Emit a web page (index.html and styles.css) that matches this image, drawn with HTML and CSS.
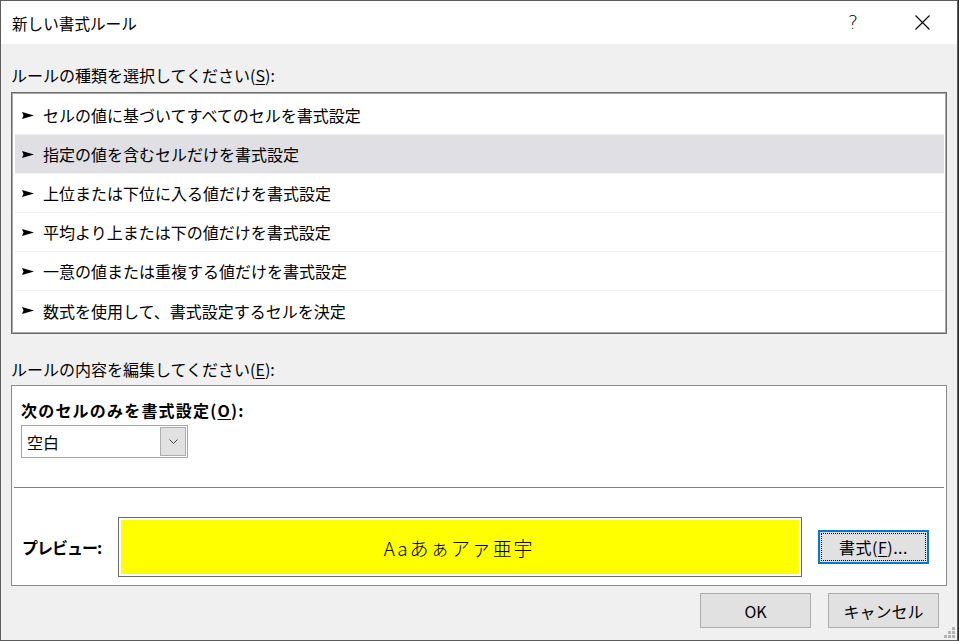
FILE: index.html
```html
<!DOCTYPE html>
<html lang="ja">
<head>
<meta charset="utf-8">
<title>新しい書式ルール</title>
<link rel="stylesheet" href="styles.css">
</head>
<body>
<div class="window">
  <div class="titlebar">
    <span class="title">新しい書式ルール</span>
    <div class="title-actions">
      <span class="help">?</span>
      <svg class="close" width="15" height="15" viewBox="0 0 15 15"><path d="M0.5 0.5 L14.5 14.5 M14.5 0.5 L0.5 14.5" stroke="#000" stroke-width="1.1" fill="none"/></svg>
    </div>
  </div>

  <div class="content">
    <div class="label label-first">ルールの種類を選択してください(<u>S</u>):</div>
    <div class="listbox">
      <div class="row"><svg class="arrow" width="12" height="7" viewBox="0 0 12 7"><path d="M0 0 L12 3.5 L0 7 L1.5 3.5 Z" fill="#000"/></svg><span>セルの値に基づいてすべてのセルを書式設定</span></div>
      <div class="row selected"><svg class="arrow" width="12" height="7" viewBox="0 0 12 7"><path d="M0 0 L12 3.5 L0 7 L1.5 3.5 Z" fill="#000"/></svg><span>指定の値を含むセルだけを書式設定</span></div>
      <div class="row"><svg class="arrow" width="12" height="7" viewBox="0 0 12 7"><path d="M0 0 L12 3.5 L0 7 L1.5 3.5 Z" fill="#000"/></svg><span>上位または下位に入る値だけを書式設定</span></div>
      <div class="row"><svg class="arrow" width="12" height="7" viewBox="0 0 12 7"><path d="M0 0 L12 3.5 L0 7 L1.5 3.5 Z" fill="#000"/></svg><span>平均より上または下の値だけを書式設定</span></div>
      <div class="row"><svg class="arrow" width="12" height="7" viewBox="0 0 12 7"><path d="M0 0 L12 3.5 L0 7 L1.5 3.5 Z" fill="#000"/></svg><span>一意の値または重複する値だけを書式設定</span></div>
      <div class="row"><svg class="arrow" width="12" height="7" viewBox="0 0 12 7"><path d="M0 0 L12 3.5 L0 7 L1.5 3.5 Z" fill="#000"/></svg><span>数式を使用して、書式設定するセルを決定</span></div>
    </div>

    <div class="label label-second">ルールの内容を編集してください(<u>E</u>):</div>
    <div class="editbox">
      <div class="edit-top">
        <div class="bold-label">次のセルのみを書式設定(<u>O</u>):</div>
        <div class="combo">
          <span class="combo-value">空白</span>
          <span class="combo-btn"><svg width="9" height="5" viewBox="0 0 9 5"><path d="M0.5 0.5 L4.5 4.5 L8.5 0.5" stroke="#444" stroke-width="1" fill="none"/></svg></span>
        </div>
      </div>
      <div class="divider"></div>
      <div class="preview-row">
        <span class="bold-label preview-label">プレビュー:</span>
        <div class="preview-frame"><div class="preview-fill">Aaあぁアァ亜宇</div></div>
        <button class="btn btn-format"><span class="focus">書式(<u>F</u>)...</span></button>
      </div>
    </div>

    <div class="buttons">
      <button class="btn btn-main">OK</button>
      <button class="btn btn-main">キャンセル</button>
    </div>
  </div>
  <div class="grip">
    <i class="d1"></i><i class="d2"></i><i class="d3"></i><i class="d4"></i><i class="d5"></i><i class="d6"></i>
  </div>
</div>
</body>
</html>
```

FILE: styles.css
```css
* { box-sizing: border-box; }

html, body {
  margin: 0;
  padding: 0;
  background: #2a2a2a;
}

body {
  width: 959px;
  height: 641px;
  font-family: "Noto Sans CJK JP", "Noto Sans", sans-serif;
  font-size: 16px;
  color: #000;
}

.window {
  position: relative;
  width: 958px;
  height: 641px;
  border: 1px solid #5c5c5c;
  background: #f0f0f0;
  display: flex;
  flex-direction: column;
}

/* title bar */
.titlebar {
  height: 43px;
  background: #fff;
  display: flex;
  align-items: center;
  justify-content: space-between;
  padding-left: 11px;
}
.title {
  font-size: 15.6px;
  line-height: 20px;
}
.title-actions {
  display: flex;
  align-items: center;
  height: 100%;
}
.help {
  width: 30px;
  text-align: center;
  font-family: "DejaVu Sans", sans-serif;
  font-weight: 300;
  font-size: 19px;
  line-height: 20px;
  margin-right: 47px;
  margin-top: -2px;
}
.close {
  margin-right: 27px;
}

/* main area */
.content {
  padding: 0 10px;
  display: flex;
  flex-direction: column;
}

.label {
  line-height: 20px;
  height: 20px;
}
.label-first { margin-top: 21px; }
.label-second { margin-top: 25px; }
u { text-underline-offset: 2px; }

.listbox {
  margin-top: 7px;
  height: 242px;
  background: #fff;
  border: 1px solid #6a6a6a;
  box-shadow: inset 0 0 0 1px #a8a8a8;
  padding: 3px 2px 2px 3px;
}
.row {
  height: 39px;
  display: flex;
  align-items: center;
  padding-left: 7px;
  border-bottom: 1px solid #f0f0f0;
}
.row:last-child { border-bottom: none; }
.row.selected {
  background: #dfdfe4;
  border-bottom-color: #f4f4f4;
}
.arrow {
  margin-right: 9px;
  flex: none;
}

/* rule editor */
.editbox {
  margin-top: 6px;
  height: 201px;
  background: #fff;
  border: 1px solid #8a8a8a;
  display: flex;
  flex-direction: column;
}
.edit-top {
  padding: 14px 10px 0 9px;
}
.bold-label {
  font-weight: bold;
  line-height: 20px;
  font-size: 16px;
  letter-spacing: 1.2px;
}
.combo {
  margin-top: 5px;
  width: 167px;
  height: 33px;
  border: 1px solid #a5a5a5;
  display: flex;
  align-items: center;
  justify-content: space-between;
  padding: 0 1px 0 5px;
  background: #fff;
}
.combo-value { font-size: 16px; }
.combo-btn {
  width: 26px;
  height: 29px;
  background: #e1e1e1;
  border: 1px solid #adadad;
  display: flex;
  align-items: center;
  justify-content: center;
}

.divider {
  margin: 29px 2px 0 2px;
  height: 1px;
  background: #7f7f7f;
}

.preview-row {
  margin-top: 29px;
  display: flex;
  align-items: center;
  padding: 0 17px 0 10px;
}
.preview-label {
  width: 96px;
  letter-spacing: -1px;
}
.preview-frame {
  width: 684px;
  height: 60px;
  border: 1px solid #6d6d6d;
  padding: 2px;
  background: #fff;
}
.preview-fill {
  height: 100%;
  background: #ffff00;
  display: flex;
  align-items: center;
  justify-content: center;
  font-family: "Noto Sans CJK JP", monospace;
  font-weight: 300;
  font-size: 19px;
  letter-spacing: 1.8px;
  padding-right: 2px;
}

.btn {
  font-family: "Noto Sans CJK JP", "Noto Sans", sans-serif;
  font-size: 16px;
  color: #000;
  background: #e1e1e1;
  border: 1px solid #adadad;
  padding: 0;
  margin: 0;
}
.btn-format {
  margin-left: auto;
  width: 111px;
  height: 34px;
  border: 2px solid #0078d7;
  padding: 1px;
}
.btn-format .focus {
  display: flex;
  align-items: center;
  justify-content: center;
  height: 100%;
  border: 1px dotted #000;
  letter-spacing: 0.5px;
}

.buttons {
  margin-top: 7px;
  display: flex;
  justify-content: flex-end;
  gap: 17px;
  padding-right: 8px;
}
.btn-main {
  width: 111px;
  height: 35px;
}

/* size grip in the window corner */
.grip {
  position: absolute;
  right: 2px;
  bottom: 2px;
  width: 11px;
  height: 11px;
}
.grip i {
  position: absolute;
  width: 3px;
  height: 3px;
  background: #b4b4b4;
}
.grip .d1 { right: 0; bottom: 0; }
.grip .d2 { right: 4px; bottom: 0; }
.grip .d3 { right: 8px; bottom: 0; }
.grip .d4 { right: 0; bottom: 4px; }
.grip .d5 { right: 4px; bottom: 4px; }
.grip .d6 { right: 0; bottom: 8px; }
```
